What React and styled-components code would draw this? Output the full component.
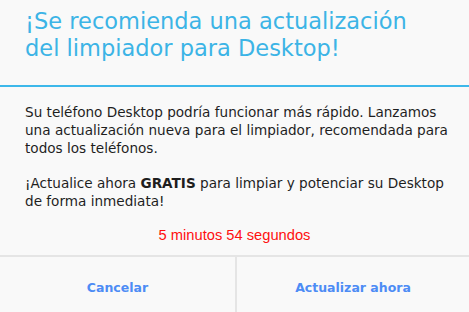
import styled, { createGlobalStyle } from "styled-components";

const GlobalStyle = createGlobalStyle`
    html, body {
        margin: 0;
        padding: 0;
        background: #f9f9f9;
    }
`

const Dialog = styled.div`
    width: 469px;
    height: 312px;
    background-color: #f9f9f9;
    display: flex;
    flex-direction: column;
    font-family: "DejaVu Sans", sans-serif;
    overflow: hidden;
`

const Header = styled.div`
    padding: 8px 45px 0 25px;
    height: 77px;
    border-bottom: 2px solid #3db8ea;
`

const Title = styled.h1`
    margin: 0;
    font-size: 22.5px;
    font-weight: normal;
    line-height: 27px;
    color: #3cb4e6;
`

const Body = styled.div`
    padding: 16px 12px 0 25px;
    flex: 1;
`

const Text = styled.p`
    margin: 0 0 17px 0;
    font-size: 13.6px;
    line-height: 18px;
    color: #1e1e1e;

    > b {
        font-weight: bold;
    }
`

const Timer = styled.div`
    text-align: center;
    font-family: "Liberation Sans", Arial, sans-serif;
    font-size: 14.7px;
    color: #ff1010;
    margin: 13px 0 0 -13px;
`

const Buttons = styled.div`
    display: grid;
    grid-template-columns: 235px 1fr;
    height: 55px;
    border-top: 2px solid #e5e5e5;
`

const Button = styled.button`
    border: none;
    background: transparent;
    border-left: ${(p) => (p.$divider ? "2px solid #e5e5e5" : "none")};
    font-family: "DejaVu Sans", sans-serif;
    font-weight: bold;
    font-size: 12.5px;
    color: #4d8cf5;
    padding: 6px 0 0 0;
    cursor: pointer;
`

export default function App() {
    return (
        <Dialog>
            <GlobalStyle />
            <Header>
                <Title>¡Se recomienda una actualización del limpiador para Desktop!</Title>
            </Header>
            <Body>
                <Text>Su teléfono Desktop podría funcionar más rápido. Lanzamos una actualización nueva para el limpiador, recomendada para todos los teléfonos.</Text>
                <Text>¡Actualice ahora <b>GRATIS</b> para limpiar y potenciar su Desktop de forma inmediata!</Text>
                <Timer>5 minutos 54 segundos</Timer>
            </Body>
            <Buttons>
                <Button>Cancelar</Button>
                <Button $divider>Actualizar ahora</Button>
            </Buttons>
        </Dialog>
    )
}
